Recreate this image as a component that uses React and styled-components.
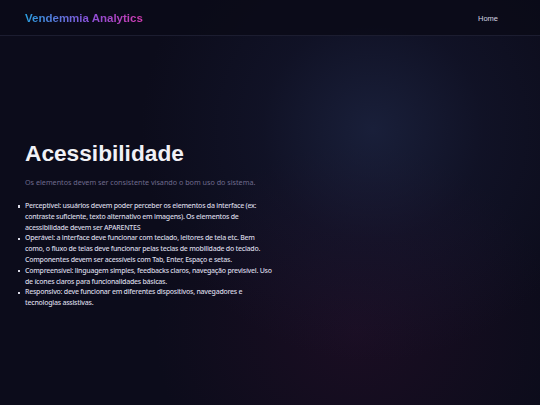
import React from 'react';
import styled, { createGlobalStyle } from 'styled-components';

const GlobalStyle = createGlobalStyle`
  html, body {
    margin: 0;
    padding: 0;
    background: #0c0c1b;
  }
  * { box-sizing: border-box; }
`;

const Page = styled.div`
  min-height: 405px;
  display: flex;
  flex-direction: column;
  background:
    radial-gradient(circle at 69% 32%, rgba(38, 50, 88, 0.5) 0%, rgba(30, 36, 70, 0.25) 24%, transparent 50%),
    radial-gradient(ellipse at 66% 82%, rgba(48, 16, 46, 0.4) 0%, transparent 40%),
    #0c0c1b;
  color: #e6e6ef;
`;

const Header = styled.header`
  height: 36px;
  display: flex;
  align-items: center;
  justify-content: space-between;
  padding: 0 42px 0 25px;
  background: rgba(10, 10, 24, 0.85);
  border-bottom: 1px solid #1c1d30;
`;

const Logo = styled.div`
  font-family: "Liberation Sans", Arial, sans-serif;
  font-weight: 700;
  font-size: 11.5px;
  background: linear-gradient(90deg, #2a9fe0 0%, #8a4fd8 55%, #d23bb0 100%);
  -webkit-background-clip: text;
  background-clip: text;
  color: transparent;
`;

const NavLink = styled.a`
  font-family: "Liberation Sans", Arial, sans-serif;
  font-size: 7.5px;
  color: #d4d4e0;
  text-decoration: none;
  padding-top: 1px;
`;

const Hero = styled.main`
  flex: 1;
  padding: 103px 25px 0 25px;
`;

const Title = styled.h1`
  margin: 0;
  font-family: "Liberation Sans", Arial, sans-serif;
  font-weight: 700;
  font-size: 22.7px;
  line-height: 28px;
  color: #f1f1f6;
`;

const Subtitle = styled.p`
  margin: 10px 0 0 0;
  font-family: "Noto Sans", sans-serif;
  font-size: 7.2px;
  line-height: 11px;
  color: #6e6a8c;
`;

const List = styled.ul`
  margin: 13px 0 0 0;
  padding: 0;
  max-width: 248px;
  list-style: none;
`;

const Item = styled.li`
  position: relative;
  font-family: "Noto Sans", sans-serif;
  font-size: 7px;
  font-weight: 500;
  letter-spacing: -0.25px;
  line-height: 10.8px;
  color: #d8d8e4;

  &::before {
    content: '';
    position: absolute;
    left: -7px;
    top: 4.2px;
    width: 2.4px;
    height: 2.4px;
    background: #d8d8e4;
  }
`;

const items = [
  'Perceptível: usuários devem poder perceber os elementos da interface (ex: contraste suficiente, texto alternativo em imagens). Os elementos de acessibilidade devem ser APARENTES',
  'Operável: a interface deve funcionar com teclado, leitores de tela etc. Bem como, o fluxo de telas deve funcionar pelas teclas de mobilidade do teclado. Componentes devem ser acessíveis com Tab, Enter, Espaço e setas.',
  'Compreensível: linguagem simples, feedbacks claros, navegação previsível. Uso de ícones claros para funcionalidades básicas.',
  'Responsivo: deve funcionar em diferentes dispositivos, navegadores e tecnologias assistivas.',
];

export default function App() {
  return (
    <Page>
      <GlobalStyle />
      <Header>
        <Logo>Vendemmia Analytics</Logo>
        <NavLink href="#">Home</NavLink>
      </Header>
      <Hero>
        <Title>Acessibilidade</Title>
        <Subtitle>Os elementos devem ser consistente visando o bom uso do sistema.</Subtitle>
        <List>
          {items.map((t) => (
            <Item key={t}>{t}</Item>
          ))}
        </List>
      </Hero>
    </Page>
  );
}
